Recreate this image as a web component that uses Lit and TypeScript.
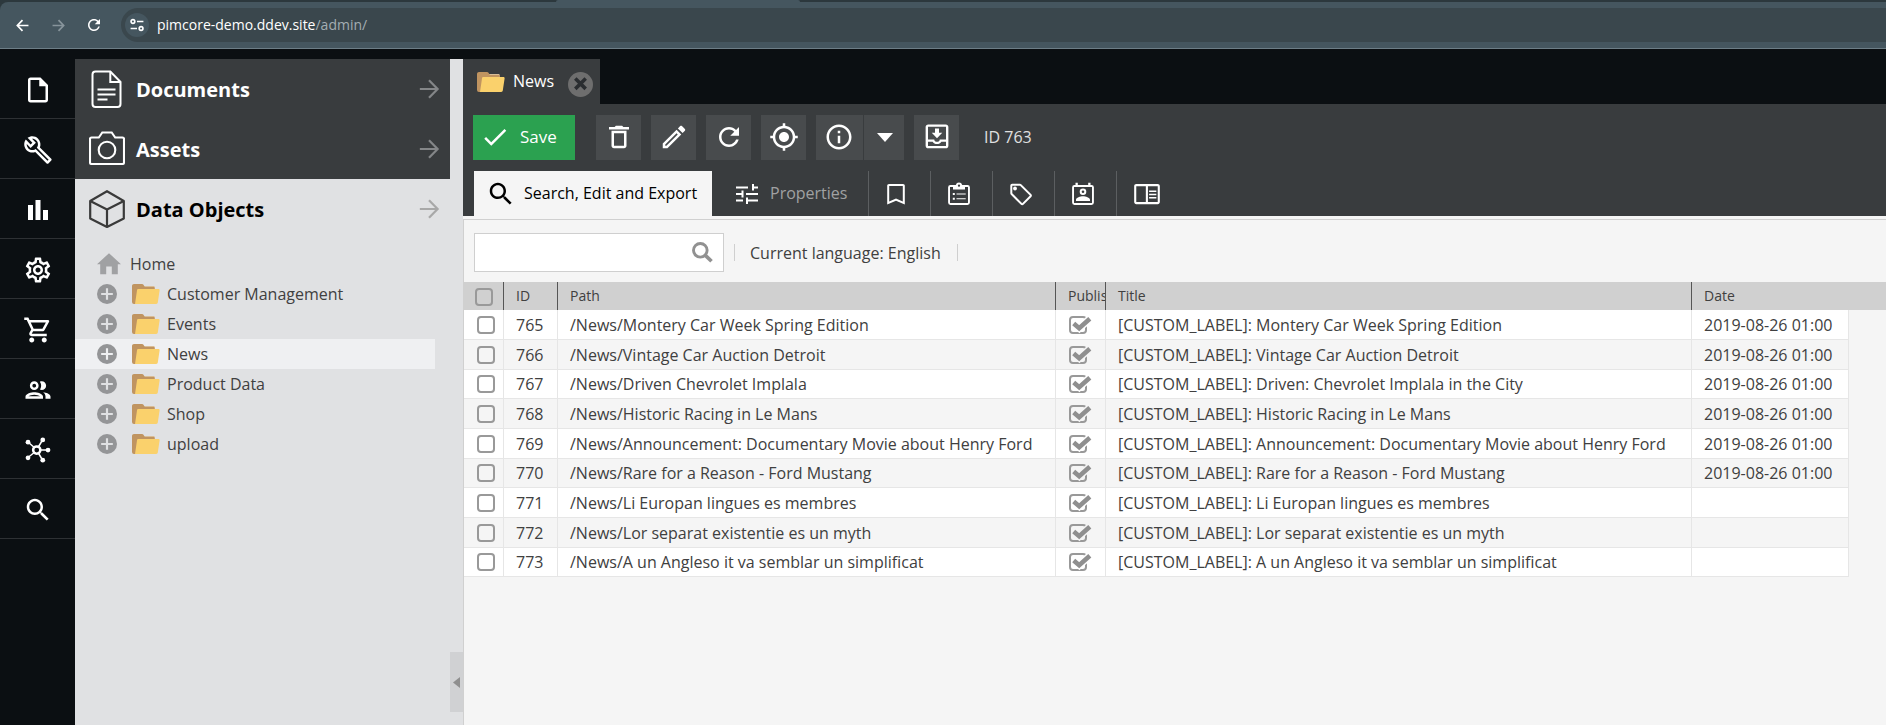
import { LitElement, html, css, svg, nothing } from "lit";
import { customElement, property, state } from "lit/decorators.js";
import { classMap } from "lit/directives/class-map.js";

const ICONS: Record<string, unknown> = {
  file: svg`<path d="M14 2H6c-1.1 0-2 .9-2 2v16c0 1.1.9 2 2 2h12c1.1 0 2-.9 2-2V8l-6-6zM6 20V4h7v5h5v11H6z"/>`,
  wrench: svg`<path d="M22.61 18.99l-9.08-9.08c.93-2.34.45-5.1-1.44-7C9.79.61 6.21.4 3.66 2.26L7.5 6.11 6.08 7.52 2.25 3.69C.39 6.23.6 9.82 2.9 12.11c1.86 1.86 4.57 2.35 6.89 1.48l9.11 9.11c.39.39 1.02.39 1.41 0l2.3-2.3c.4-.38.4-1.01 0-1.41zm-3 1.6l-9.46-9.46c-.61.45-1.29.72-2 .82-1.36.2-2.79-.21-3.83-1.25C3.37 9.76 2.93 8.5 3 7.26l3.09 3.09 4.24-4.24-3.09-3.09c1.24-.07 2.49.37 3.44 1.31 1.08 1.08 1.49 2.57 1.24 3.96-.12.71-.42 1.37-.88 1.96l9.45 9.45-.88.89z"/>`,
  chart: svg`<path d="M4 8h4v12H4zM10 4h4v16h-4zM16 12h4v8h-4z"/>`,
  gear: svg`<path d="M19.43 12.98c.04-.32.07-.64.07-.98 0-.34-.03-.66-.07-.98l2.11-1.65c.19-.15.24-.42.12-.64l-2-3.46c-.09-.16-.26-.25-.44-.25-.06 0-.12.01-.17.03l-2.49 1c-.52-.4-1.08-.73-1.69-.98l-.38-2.65C14.46 2.18 14.25 2 14 2h-4c-.25 0-.46.18-.49.42l-.38 2.65c-.61.25-1.17.59-1.69.98l-2.49-1c-.06-.02-.12-.03-.18-.03-.17 0-.34.09-.43.25l-2 3.46c-.13.22-.07.49.12.64l2.11 1.65c-.04.32-.07.65-.07.98 0 .33.03.66.07.98l-2.11 1.65c-.19.15-.24.42-.12.64l2 3.46c.09.16.26.25.44.25.06 0 .12-.01.17-.03l2.49-1c.52.4 1.08.73 1.69.98l.38 2.65c.03.24.24.42.49.42h4c.25 0 .46-.18.49-.42l.38-2.65c.61-.25 1.17-.59 1.69-.98l2.49 1c.06.02.12.03.18.03.17 0 .34-.09.43-.25l2-3.46c.12-.22.07-.49-.12-.64l-2.11-1.65zm-1.98-1.71c.04.31.05.52.05.73 0 .21-.02.43-.05.73l-.14 1.13.89.7 1.08.84-.7 1.21-1.27-.51-1.04-.42-.9.68c-.43.32-.84.56-1.25.73l-1.06.43-.16 1.13-.2 1.35h-1.4l-.19-1.35-.16-1.13-1.06-.43c-.43-.18-.83-.41-1.23-.71l-.91-.7-1.06.43-1.27.51-.7-1.21 1.08-.84.89-.7-.14-1.13c-.03-.31-.05-.54-.05-.74s.02-.43.05-.73l.14-1.13-.89-.7-1.08-.84.7-1.21 1.27.51 1.04.42.9-.68c.43-.32.84-.56 1.25-.73l1.06-.43.16-1.13.2-1.35h1.39l.19 1.35.16 1.13 1.06.43c.43.18.83.41 1.23.71l.91.7 1.06-.43 1.27-.51.7 1.21-1.07.85-.89.7.14 1.13zM12 8c-2.21 0-4 1.79-4 4s1.79 4 4 4 4-1.79 4-4-1.79-4-4-4zm0 6c-1.1 0-2-.9-2-2s.9-2 2-2 2 .9 2 2-.9 2-2 2z"/>`,
  cart: svg`<path d="M15.55 13c.75 0 1.41-.41 1.75-1.03l3.58-6.49c.37-.66-.11-1.48-.87-1.48H5.21l-.94-2H1v2h2l3.6 7.59-1.35 2.44C4.52 15.37 5.48 17 7 17h12v-2H7l1.1-2h7.45zM6.16 6h12.15l-2.76 5H8.53L6.16 6zM7 18c-1.1 0-1.99.9-1.99 2S5.9 22 7 22s2-.9 2-2-.9-2-2-2zm10 0c-1.1 0-1.99.9-1.99 2s.89 2 1.99 2 2-.9 2-2-.9-2-2-2z"/>`,
  people: svg`<path d="M9 13.75c-2.34 0-7 1.17-7 3.5V19h14v-1.75c0-2.33-4.66-3.5-7-3.5zM4.34 17c.84-.58 2.87-1.25 4.66-1.25s3.82.67 4.66 1.25H4.34zM9 12c1.93 0 3.5-1.57 3.5-3.5S10.93 5 9 5 5.5 6.57 5.5 8.5 7.07 12 9 12zm0-5c.83 0 1.5.67 1.5 1.5S9.83 10 9 10s-1.5-.67-1.5-1.5S8.17 7 9 7zm7.04 6.81c1.16.84 1.96 1.96 1.96 3.44V19h4v-1.75c0-2.02-3.5-3.17-5.96-3.44zM15 12c1.93 0 3.5-1.57 3.5-3.5S16.93 5 15 5c-.54 0-1.04.13-1.5.35.63.89 1 1.98 1 3.15s-.37 2.26-1 3.15c.46.22.96.35 1.5.35z"/>`,
  hub: svg`<g fill="none" stroke="currentColor"><circle cx="11" cy="12" r="2.9" stroke-width="2"/><path stroke-width="1.2" d="M9 10 4 5.6M12.4 9.4l3.2-5.4M14 12h6M12.4 14.6l3.2 5.4M9 14l-5 4"/></g><circle cx="4" cy="5.7" r="1.9"/><circle cx="15.8" cy="3.9" r="1.9"/><circle cx="20" cy="12" r="1.9"/><circle cx="15.8" cy="20.1" r="1.9"/><circle cx="4" cy="18.2" r="1.9"/>`,
  search: svg`<path d="M15.5 14h-.79l-.28-.27C15.41 12.59 16 11.11 16 9.5 16 5.91 13.09 3 9.5 3S3 5.91 3 9.5 5.91 16 9.5 16c1.61 0 3.09-.59 4.23-1.57l.27.28v.79l5 4.99L20.49 19l-4.99-5zm-6 0C7.01 14 5 11.99 5 9.5S7.01 5 9.5 5 14 7.01 14 9.5 11.99 14 9.5 14z"/>`,
  check: svg`<path d="M9 16.17 4.83 12l-1.42 1.41L9 19 21 7l-1.41-1.41z"/>`,
  trash: svg`<path d="M16 9v10H8V9h8m-1.5-6h-5l-1 1H4v2h16V4h-4.5l-1-1zM18 7H6v12c0 1.1.9 2 2 2h8c1.1 0 2-.9 2-2V7z"/>`,
  pencil: svg`<path d="m14.06 9.02.92.92L5.92 19H5v-.92l9.06-9.06M17.66 3c-.25 0-.51.1-.7.29l-1.83 1.83 3.75 3.75 1.83-1.83c.39-.39.39-1.02 0-1.41l-2.34-2.34c-.2-.2-.45-.29-.71-.29zm-3.6 3.19L3 17.25V21h3.75L17.81 9.94l-3.75-3.75z"/>`,
  refresh: svg`<path d="M17.65 6.35C16.2 4.9 14.21 4 12 4c-4.42 0-7.99 3.58-7.99 8s3.57 8 7.99 8c3.73 0 6.84-2.55 7.73-6h-2.08c-.82 2.33-3.04 4-5.65 4-3.31 0-6-2.69-6-6s2.69-6 6-6c1.66 0 3.14.69 4.22 1.78L13 11h7V4l-2.35 2.35z"/>`,
  locate: svg`<path d="M12 8c-2.21 0-4 1.79-4 4s1.79 4 4 4 4-1.79 4-4-1.79-4-4-4zm8.94 3c-.46-4.17-3.77-7.48-7.94-7.94V1h-2v2.06C6.83 3.52 3.52 6.83 3.06 11H1v2h2.06c.46 4.17 3.77 7.48 7.94 7.94V23h2v-2.06c4.17-.46 7.48-3.77 7.94-7.94H23v-2h-2.06zM12 19c-3.87 0-7-3.13-7-7s3.13-7 7-7 7 3.13 7 7-3.13 7-7 7z"/>`,
  info: svg`<path d="M11 7h2v2h-2zm0 4h2v6h-2zm1-9C6.48 2 2 6.48 2 12s4.48 10 10 10 10-4.48 10-10S17.52 2 12 2zm0 18c-4.41 0-8-3.59-8-8s3.59-8 8-8 8 3.59 8 8-3.59 8-8 8z"/>`,
  inbox: svg`<path d="M19 1.9H5c-1.2 0-2.1.9-2.1 2v15c0 1.2.9 2.1 2.1 2.1h14c1.2 0 2.1-.9 2.1-2.1v-15c0-1.1-.9-2-2.1-2zm.2 17.2H4.8v-3.4h3.700c.7 1.1 2 1.900 3.500 1.900s2.800-.8 3.500-1.900h3.700v3.400zm0-5.200h-5c0 1.100-1 1.900-2.200 1.900s-2.200-.8-2.200-1.900h-5V3.800h14.400v10.100z"/><path d="M16.200 8.600h-2.600V5.200h-3.200v3.400H7.800L12 12.900z"/>`,
  tune: svg`<path d="M1 17.5v2h7v-2H1zM1 4.5v2h12v-2H1zm12 17.500v-2.500h10v-2H13v-2h-2v6.500h2zM6.500 8.500v2.500H1v2h5.500v2.500h2v-7h-2zM23 13v-2H11v2h12zm-6-4.500h2v-2h4v-2h-4v-2.500h-2z"/>`,
  bookmark: svg`<path d="M19 2H5c-1.100 0-1.800.8-1.800 1.800V22.600l8.800-3.800 8.800 3.800V3.800C20.800 2.800 20.100 2 19 2zm-.2 17.500L12 16.600l-6.800 2.900V4h13.600v15.500z"/>`,
  clipboard: svg`<path d="M20.500 3h-5.300a3.300 3.300 0 0 0-6.400 0H3.500A2.400 2.400 0 0 0 1.100 5.300v15.200a2.400 2.400 0 0 0 2.400 2.400h17a2.400 2.400 0 0 0 2.400-2.400V5.300A2.400 2.400 0 0 0 20.500 3zM12 2.500a1.100 1.100 0 1 1 0 2.300 1.100 1.100 0 0 1 0-2.300zM21 21H3V5h3v2.500h12V5h3v16z"/><path d="M5.800 11h2v2h-2zM9.500 11.500h9.200v1.100H9.500zM5.800 15.700h2v2h-2zM9.500 16.200h9.200v1.100H9.500z"/>`,
  tag: svg`<path d="m22.300 12.200-9.800-9.800c-.4-.4-.9-.6-1.500-.6H3.200c-1.100 0-1.900.9-1.900 2v7.500c0 .6.200 1.100.6 1.500l9.800 9.800c.4.4.9.6 1.500.6s1.100-.2 1.500-.6l7.600-7.500c.4-.4.6-.9.6-1.500s-.2-1-.6-1.400zM13.200 21.200 3.300 11.300V3.800H11l9.900 9.800-7.700 7.600z"/><circle cx="6" cy="6.500" r="1.900"/>`,
  contact: svg`<path d="M20.500 3h-1V.8h-2.300V3H6.800V.8H4.500V3h-1A2.400 2.400 0 0 0 1.100 5.300v15.200a2.400 2.400 0 0 0 2.400 2.400h17a2.400 2.400 0 0 0 2.400-2.400V5.300A2.400 2.400 0 0 0 20.500 3zM21 21H3V5h18v16z"/><path d="M12 6.500a3.300 3.300 0 1 0 0 6.600 3.300 3.300 0 0 0 0-6.600zm0 2a1.300 1.300 0 1 1 0 2.600 1.300 1.300 0 0 1 0-2.600zM12 14.200c-2.600 0-7 1.300-7 3.600V19h14v-1.200c0-2.300-4.400-3.600-7-3.600z"/>`,
  reader: svg`<path d="M21.200 3.500H2.800C1.800 3.500 1 4.300 1 5.300v13.600c0 1 .8 1.800 1.800 1.800h18.400c1 0 1.800-.8 1.800-1.800V5.300c0-1-.8-1.800-1.800-1.800zM2.800 18.900V5.300H11v13.600H2.800zm18.400 0h-8.400V5.300h8.400v13.600z"/><path d="M13.800 9h6.200v1.300h-6.200zM13.800 11.800h6.200v1.300h-6.200zM13.800 14.600h6.200v1.300h-6.200z"/>`,
  arrow: svg`<path fill="none" stroke="currentColor" stroke-width="2.400" d="M2 12h19M12 2.400l9.400 9.600-9.400 9.600"/>`,
  home: svg`<path d="M12 1.200 0 12.300h3.200v10h6v-7.800h5.600v7.800h6v-10H24z"/>`,
  plus: svg`<circle cx="12" cy="12" r="12"/><path fill="none" stroke="var(--knock,#e0e1e3)" stroke-width="2.600" d="M12 5v14M5 12h14"/>`,
  close: svg`<circle cx="12" cy="12" r="12" fill="#6e6e6e"/><path fill="none" stroke="#2a2d30" stroke-width="3.400" d="m7 6.200 10 10M17 6.200l-10 10"/>`,
  document: svg`<g fill="none" stroke="currentColor" stroke-width="2"><path d="M6.500 1.500h14.800l10.200 10.500v22a3 3 0 0 1-3 3h-22a3 3 0 0 1-3-3V4.500a3 3 0 0 1 3-3z"/><path d="M21.300 1.500V12h10.200"/><path stroke-width="2.200" d="M8.500 19.500h18M8.500 24.500h18M8.500 29.500h10"/></g>`,
  camera: svg`<g fill="none" stroke="currentColor" stroke-width="2.100"><path d="M2.500 7.500h7.300l3.500-5h9.400l3.500 5h7.300c1 0 1.500.6 1.500 1.500v23.500c0 .9-.5 1.500-1.500 1.500h-31C1.500 34 1 33.400 1 32.500V9c0-.9.500-1.500 1.500-1.500z"/><circle cx="18" cy="20" r="8.300"/></g>`,
  cube: svg`<g fill="none" stroke="currentColor" stroke-width="2.200" stroke-linejoin="round"><path d="M18 1.200 34.800 11v17.400L18 37 1.200 28.400V11z"/><path d="M1.200 11 18 19.500 34.800 11M18 19.500v17.500"/></g>`,
  back: svg`<path fill="none" stroke="currentColor" stroke-width="3.200" d="M23 12H4M12 2l-9.500 10L12 22"/>`,
  forward: svg`<path fill="none" stroke="currentColor" stroke-width="3.200" d="M1 12h19M12 2l9.500 10L12 22"/>`,
  sliders: svg`<g fill="none" stroke="currentColor" stroke-width="2.800"><circle cx="5" cy="6" r="3.200"/><path d="M12 6h11M1 18h11"/><circle cx="19" cy="18" r="3.200"/></g>`,
  zoom: svg`<g fill="none" stroke="currentColor"><circle cx="9.500" cy="9.500" r="7.800" stroke-width="3.300"/><path stroke-width="4.200" d="m15 15 7.300 7"/></g>`,
  tick: svg`<g fill="none"><path stroke="var(--row,#fff)" stroke-width="7.500" d="M8 9.500 10.500 12 22 1.500"/><path stroke="currentColor" stroke-width="4.600" d="M4.700 7.500 10.200 12.300 20.800 2.800"/></g>`,
  left: svg`<path d="M24 0v24L0 12z"/>`,
  down: svg`<path d="M0 0h24L12 24z"/>`,
};

@customElement("ui-icon")
export class UiIcon extends LitElement {
  @property() name = "";
  @property() box = "0 0 24 24";
  @property() fit = "xMidYMid meet";

  static styles = css`
    :host { display: block; flex: none; width: 30px; height: 30px; }
    svg { display: block; width: 100%; height: 100%; fill: currentColor; }
  `;

  render() {
    return html`<svg viewBox=${this.box} preserveAspectRatio=${this.fit} aria-hidden="true">${ICONS[this.name]}</svg>`;
  }
}

@customElement("folder-icon")
export class FolderIcon extends LitElement {
  static styles = css`
    :host { display: block; flex: none; width: 28px; height: 20px; }
    svg { display: block; }
  `;

  render() {
    return html`<svg width="28" height="20" viewBox="0 0 28 20" aria-hidden="true">
      <path fill="#d9bd97" d="M10 2h11.500c.8 0 1.200.5 1.200 1.200V8H10z"/>
      <path fill="#c09460" d="M2 0h8c.7 0 1.100.3 1.500.8l1.300 2.200h8.700c.8 0 1.200.5 1.200 1.200V8L5 20H2a2 2 0 0 1-2-2V2C0 .9.900 0 2 0z"/>
      <path fill="#fad16c" d="M6.400 5h20c.9 0 1.400.6 1.200 1.500L25.800 18.600c-.1.900-.7 1.400-1.600 1.400H3L5 6.400C5.100 5.500 5.600 5 6.400 5z"/>
    </svg>`;
  }
}

interface Row { id: number; path: string; title: string; date: string; }

const ROWS: Row[] = [
  { id: 765, path: "Montery Car Week Spring Edition", title: "Montery Car Week Spring Edition", date: "2019-08-26 01:00" },
  { id: 766, path: "Vintage Car Auction Detroit", title: "Vintage Car Auction Detroit", date: "2019-08-26 01:00" },
  { id: 767, path: "Driven Chevrolet Implala", title: "Driven: Chevrolet Implala in the City", date: "2019-08-26 01:00" },
  { id: 768, path: "Historic Racing in Le Mans", title: "Historic Racing in Le Mans", date: "2019-08-26 01:00" },
  { id: 769, path: "Announcement: Documentary Movie about Henry Ford", title: "Announcement: Documentary Movie about Henry Ford", date: "2019-08-26 01:00" },
  { id: 770, path: "Rare for a Reason - Ford Mustang", title: "Rare for a Reason - Ford Mustang", date: "2019-08-26 01:00" },
  { id: 771, path: "Li Europan lingues es membres", title: "Li Europan lingues es membres", date: "" },
  { id: 772, path: "Lor separat existentie es un myth", title: "Lor separat existentie es un myth", date: "" },
  { id: 773, path: "A un Angleso it va semblar un simplificat", title: "A un Angleso it va semblar un simplificat", date: "" },
];

const RAIL = [
  ["file", "File"], ["wrench", "Tools"], ["chart", "Marketing"], ["gear", "Settings"],
  ["cart", "Ecommerce"], ["people", "Customers"], ["hub", "Data hub"], ["search", "Search"],
];

const FOLDERS = ["Customer Management", "Events", "News", "Product Data", "Shop", "upload"];

@customElement("browser-bar")
export class BrowserBar extends LitElement {
  static styles = css`
    :host { display: block; background: #2c383d; font: 14px/24px "Open Sans", sans-serif; }
    .strip { display: flex; height: 2px; padding-left: 556px; }
    .tab { width: 244px; background: #45565f; border-radius: 2px 2px 0 0; }
    .bar {
      display: flex; align-items: center; height: 46px; padding-left: 13px;
      background: #45565f; border-bottom: 1px solid #6d7e87; border-radius: 8px 0 0 0; color: #fff;
    }
    button { display: grid; place-items: center; width: 18px; height: 24px; margin-right: 18px; padding: 0; border: 0; background: none; color: inherit; }
    button[disabled] { color: #87949b; }
    .nav { width: 13px; height: 13px; }
    .reload { width: 18px; height: 18px; }
    .address {
      display: flex; align-items: center; gap: 8px; flex: 1; height: 34px; padding-left: 4px;
      background: #3a474d; border-radius: 17px 0 0 17px;
    }
    .chip { display: grid; place-items: center; width: 24px; height: 24px; border-radius: 50%; background: #45565f; }
    .chip ui-icon { width: 14px; height: 14px; }
    .url { color: #fff; text-decoration: none; }
    .path { color: #a3adb2; }
  `;

  render() {
    return html`
      <div class="strip"><div class="tab"></div></div>
      <div class="bar">
        <button aria-label="Back"><ui-icon class="nav" name="back"></ui-icon></button>
        <button aria-label="Forward" disabled><ui-icon class="nav" name="forward"></ui-icon></button>
        <button aria-label="Reload"><ui-icon class="reload" name="refresh"></ui-icon></button>
        <div class="address">
          <span class="chip"><ui-icon name="sliders"></ui-icon></span>
          <a class="url" href="#">pimcore-demo.ddev.site<span class="path">/admin/</span></a>
        </div>
      </div>`;
  }
}

@customElement("side-panel")
export class SidePanel extends LitElement {
  @state() private selected = "News";

  static styles = css`
    :host { display: flex; flex: none; background: #e0e1e3; font: 16px/24px "Open Sans", sans-serif; color: #404040; }
    .main { width: 375px; }
    .head {
      display: flex; align-items: center; gap: 11px; width: 100%; height: 60px; padding: 0 10px 0 14px;
      border: 0; background: #393c3e; color: #fff; font: bold 20px/28px "Open Sans", sans-serif; text-align: left;
    }
    .head.open { background: none; color: #000; }
    .head.open .kind { color: #3a3a3a; }
    .head span { flex: 1; padding-top: 2px; }
    .kind { width: 36px; height: 38px; }
    .go { width: 22px; height: 22px; color: #848688; }
    .open .go { color: #a8a8a8; }
    ul { list-style: none; margin: 0; padding: 10px 15px 0 0; }
    .item {
      display: flex; align-items: center; width: 100%; height: 30px; padding: 0 0 0 22px;
      border: 0; background: none; color: inherit; font: inherit; text-align: left;
    }
    .item.on { background: #eff0f2; --knock: #eff0f2; }
    .house { width: 24px; height: 24px; margin-right: 9px; color: #a0a1a3; }
    .expand { width: 20px; height: 20px; margin-right: 15px; color: #949597; }
    folder-icon { margin-right: 7px; }
    .split { display: flex; flex-direction: column; justify-content: flex-end; width: 13px; padding-bottom: 13px; }
    .fold { display: grid; place-items: center; width: 13px; height: 60px; padding: 0; border: 0; background: #d0d1d3; color: #8f8f8f; }
    .fold ui-icon { width: 7px; height: 11px; }
  `;

  private head(icon: string, label: string, open = false) {
    return html`<button class=${classMap({ head: true, open })} aria-expanded=${open}>
      <ui-icon class="kind" name=${icon} box="0 0 36 38"></ui-icon><span>${label}</span>
      <ui-icon class="go" name="arrow"></ui-icon>
    </button>`;
  }

  render() {
    return html`
      <div class="main">
        ${this.head("document", "Documents")}
        ${this.head("camera", "Assets")}
        ${this.head("cube", "Data Objects", true)}
        <ul>
          <li><button class="item"><ui-icon class="house" name="home"></ui-icon>Home</button></li>
          ${FOLDERS.map((f) => html`<li>
            <button class=${classMap({ item: true, on: f === this.selected })} @click=${() => (this.selected = f)}>
              <ui-icon class="expand" name="plus"></ui-icon><folder-icon></folder-icon>${f}
            </button>
          </li>`)}
        </ul>
      </div>
      <div class="split">
        <button class="fold" aria-label="Collapse panel"><ui-icon name="left" fit="none"></ui-icon></button>
      </div>`;
  }
}

@customElement("data-grid")
export class DataGrid extends LitElement {
  static styles = css`
    :host { display: block; font: 16px/24px "Open Sans", sans-serif; color: #404040; }
    table { width: 100%; table-layout: fixed; border-collapse: separate; border-spacing: 0; }
    .c-check { width: 40px; }
    .c-id { width: 54px; }
    .c-path { width: 498px; }
    .c-pub { width: 50px; }
    .c-title { width: 586px; }
    .c-date { width: 157px; }
    th, td { box-sizing: border-box; padding: 0 0 0 12px; text-align: left; white-space: nowrap; overflow: hidden; }
    th { height: 28px; background: #d0d0d0; font-size: 14px; line-height: 20px; font-weight: normal; border-right: 1px solid #555; }
    th.rest { border-right: 0; }
    th.last { border-right-color: #d0d0d0; }
    td { height: 30px; background: #fff; border-right: 1px solid #e6e6e6; border-bottom: 1px solid #e6e6e6; }
    tr:nth-child(even) td { background: #f5f5f5; --row: #f5f5f5; }
    tr:nth-child(3n) td { height: 29px; }
    tbody td.rest { background: none; border: 0; }
    .tick {
      display: block; appearance: none; box-sizing: border-box; width: 18px; height: 18px; margin: 0;
      border: 2px solid #999; border-radius: 4px;
    }
    th .tick { margin: 2px 0 0 -1px; }
    td .tick { margin-left: 1px; }
    .pub { display: grid; width: 24px; margin-left: 1px; }
    .pub > * { grid-area: 1 / 1; }
    .pub .tick { margin: 0; }
    .pub ui-icon { width: 24px; height: 18px; color: #8f8f8f; }
  `;

  render() {
    return html`<table>
      <colgroup>
        <col class="c-check"><col class="c-id"><col class="c-path"><col class="c-pub"><col class="c-title"><col class="c-date"><col>
      </colgroup>
      <thead><tr>
        <th><input class="tick" type="checkbox" aria-label="Select all"></th>
        <th>ID</th><th>Path</th><th>Published</th><th>Title</th><th class="last">Date</th><th class="rest"></th>
      </tr></thead>
      <tbody>
        ${ROWS.map((r) => html`<tr>
          <td><input class="tick" type="checkbox" aria-label="Select ${r.id}"></td>
          <td>${r.id}</td>
          <td>/News/${r.path}</td>
          <td><label class="pub"><input class="tick" type="checkbox" checked aria-label="Published ${r.id}"><ui-icon name="tick" box="0 0 24 18"></ui-icon></label></td>
          <td>[CUSTOM_LABEL]: ${r.title}</td>
          <td>${r.date}</td>
          <td class="rest"></td>
        </tr>`)}
      </tbody>
    </table>`;
  }
}

@customElement("object-editor")
export class ObjectEditor extends LitElement {
  static styles = css`
    :host { display: flex; flex-direction: column; flex: 1; min-width: 0; font: 16px/24px "Open Sans", sans-serif; color: #404040; }
    button { border: 0; padding: 0; font: inherit; color: #fff; }
    .tabs { display: flex; height: 45px; }
    .tab { display: flex; align-items: center; box-sizing: border-box; width: 137px; padding: 0 7px 0 14px; background: #393c3e; color: #fff; }
    .tab a { flex: 1; padding: 0 0 2px 8px; color: inherit; text-decoration: none; }
    .close { width: 25px; height: 25px; margin-top: 5px; background: none; }
    .close ui-icon { width: 25px; height: 25px; }
    .tools { display: flex; align-items: center; gap: 10px; padding: 11px 10px; background: #393c3e; color: #e0e0e0; }
    .tools button { display: grid; place-items: center; width: 45px; height: 45px; padding-bottom: 1px; background: #484b4d; }
    .tools .save { display: flex; align-items: center; gap: 10px; width: 102px; margin-right: 11px; padding-left: 7px; background: #2ba150; font-size: 17px; }
    .pair { display: flex; gap: 1px; }
    .tools .pair .about { width: 47px; padding-right: 2px; }
    .tools .pair .more { width: 40px; padding-left: 2px; }
    .more ui-icon { width: 16px; height: 9px; }
    .id { margin-left: 15px; padding-bottom: 2px; }
    .views { display: flex; height: 45px; padding-left: 11px; background: #393c3e; }
    .view { display: flex; align-items: center; box-sizing: border-box; height: 45px; background: none; }
    .view span { padding-bottom: 2px; }
    .view.on { gap: 8px; width: 238px; padding-left: 12px; background: #f5f5f5; color: #000; }
    .view.props { gap: 11px; width: 156px; padding-left: 23px; color: #a0a1a2; }
    .view.small { width: 62px; padding-left: 15px; border-left: 1px solid #5c5f61; }
    .view.small + .small { padding-left: 16px; }
    .view ui-icon { color: #fff; width: 24px; height: 24px; }
    .view.on ui-icon { width: 30px; height: 30px; color: #000; }
    .view .wide { width: 28px; height: 28px; }
    .body { flex: 1; margin-top: 3px; border: 1px solid #d0d0d0; border-width: 1px 0 0 1px; }
    .sheet { display: flex; flex-direction: column; flex: 1; background: #f5f5f5; }
    .filter { display: flex; align-items: center; height: 39px; padding: 13px 10px 10px; }
    .field { display: flex; align-items: center; box-sizing: border-box; width: 250px; height: 39px; padding-right: 10px; background: #fff; border: 1px solid #cfcfcf; }
    .field input { flex: 1; min-width: 0; padding: 0 8px; border: 0; outline: 0; background: none; font: inherit; }
    .field button { background: none; color: #919191; }
    .field ui-icon { width: 21px; height: 21px; }
    .bar { width: 1px; height: 17px; margin: 0 10px; background: #cfcfcf; }
    .lang { padding: 0 6px 0 5px; }
  `;

  private tool(icon: string, label: string, part = "") {
    return html`<button class=${part} aria-label=${label}><ui-icon name=${icon}></ui-icon></button>`;
  }

  private view(icon: string, label: string, wide = false) {
    return html`<button class="view small" aria-label=${label}><ui-icon class=${wide ? "wide" : nothing} name=${icon}></ui-icon></button>`;
  }

  render() {
    return html`
      <div class="tabs">
        <div class="tab"><folder-icon></folder-icon><a href="#">News</a><button class="close" aria-label="Close tab"><ui-icon name="close"></ui-icon></button></div>
      </div>
      <div class="tools">
        <button class="save"><ui-icon name="check"></ui-icon>Save</button>
        ${this.tool("trash", "Delete")}${this.tool("pencil", "Rename")}${this.tool("refresh", "Reload")}${this.tool("locate", "Locate in tree")}
        <div class="pair">
          ${this.tool("info", "Info", "about")}
          <button class="more" aria-label="More info"><ui-icon name="down" fit="none"></ui-icon></button>
        </div>
        ${this.tool("inbox", "Import")}
        <span class="id">ID 763</span>
      </div>
      <div class="views">
        <button class="view on"><ui-icon name="search"></ui-icon><span>Search, Edit and Export</span></button>
        <button class="view props"><ui-icon name="tune"></ui-icon><span>Properties</span></button>
        ${this.view("bookmark", "Bookmarks")}${this.view("clipboard", "Notes and events")}${this.view("tag", "Tags")}${this.view("contact", "Schedule")}${this.view("reader", "Layout", true)}
      </div>
      <div class="sheet"><div class="body">
        <div class="filter">
          <div class="field"><input type="text" aria-label="Search"><button aria-label="Run search"><ui-icon name="zoom"></ui-icon></button></div>
          <span class="bar"></span><span class="lang">Current language: English</span><span class="bar"></span>
        </div>
        <data-grid></data-grid>
      </div></div>`;
  }
}

@customElement("app-root")
export class AppRoot extends LitElement {
  static styles = css`
    :host { display: flex; flex-direction: column; min-height: 100vh; background: #0b0f12; }
    .page { display: flex; flex: 1; padding-top: 10px; }
    .rail { flex: none; width: 75px; }
    .rail button {
      display: grid; place-items: center; box-sizing: border-box; width: 75px; height: 60px; padding: 2px 0 0 1px;
      border: 0; border-bottom: 1px solid #2e3134; background: none; color: #fff;
    }
  `;

  render() {
    return html`
      <browser-bar></browser-bar>
      <div class="page">
        <nav class="rail">
          ${RAIL.map(([icon, label]) => html`<button aria-label=${label}><ui-icon name=${icon}></ui-icon></button>`)}
        </nav>
        <side-panel></side-panel>
        <object-editor></object-editor>
      </div>`;
  }
}
